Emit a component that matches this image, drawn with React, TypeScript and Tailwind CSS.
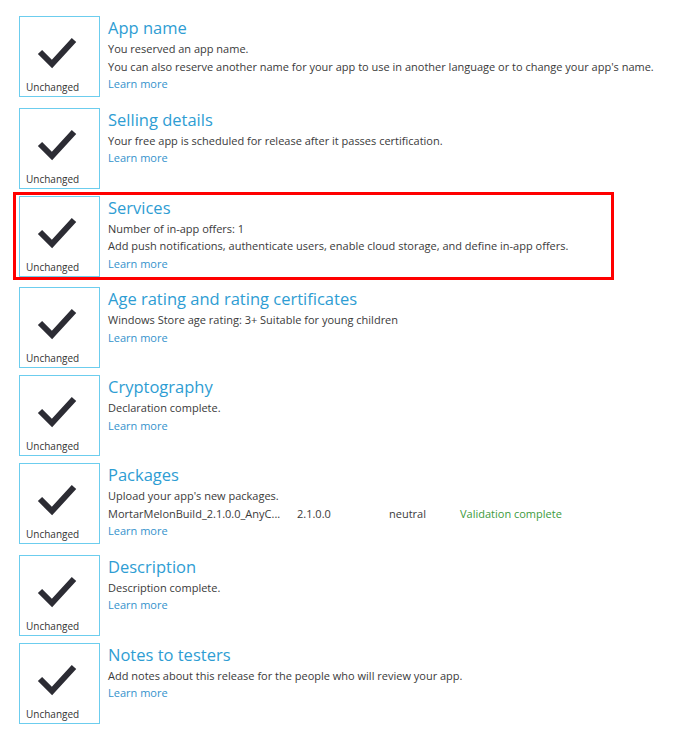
import React from 'react';

interface Section {
  title: string;
  lines: React.ReactNode[];
  highlighted?: boolean;
}

const sections: Section[] = [
  {
    title: 'App name',
    lines: [
      'You reserved an app name.',
      "You can also reserve another name for your app to use in another language or to change your app's name.",
    ],
  },
  {
    title: 'Selling details',
    lines: ['Your free app is scheduled for release after it passes certification.'],
  },
  {
    title: 'Services',
    lines: [
      'Number of in-app offers: 1',
      'Add push notifications, authenticate users, enable cloud storage, and define in-app offers.',
    ],
    highlighted: true,
  },
  {
    title: 'Age rating and rating certificates',
    lines: ['Windows Store age rating: 3+ Suitable for young children'],
  },
  {
    title: 'Cryptography',
    lines: ['Declaration complete.'],
  },
  {
    title: 'Packages',
    lines: [
      "Upload your app's new packages.",
      <div className="flex">
        <span className="w-[189px]">MortarMelonBuild_2.1.0.0_AnyC...</span>
        <span className="w-[92px]">2.1.0.0</span>
        <span className="w-[71px]">neutral</span>
        <span className="text-[#3c9a3c]">Validation complete</span>
      </div>,
    ],
  },
  {
    title: 'Description',
    lines: ['Description complete.'],
  },
  {
    title: 'Notes to testers',
    lines: ['Add notes about this release for the people who will review your app.'],
  },
];

function CheckTile() {
  return (
    <div className="relative w-[81px] h-[81px] shrink-0 border border-[#6ccdee] bg-white">
      <svg width="79" height="79" viewBox="0 0 79 79" className="absolute left-0 top-0">
        <polyline
          points="20,35 32,47 54,23"
          fill="none"
          stroke="#2c2c34"
          strokeWidth="6"
          strokeLinejoin="miter"
        />
      </svg>
      <span className="absolute left-[6px] bottom-[3px] text-[10px] leading-[12px] text-[#333]">Unchanged</span>
    </div>
  );
}

export default function App() {
  return (
    <div
      className="min-h-screen bg-white pl-[19px] pt-[16px]"
      style={{ fontFamily: '"Open Sans", "Noto Sans", sans-serif' }}
    >
      {sections.map((s, i) => (
        <div key={i} className="relative flex items-start gap-[8px] mb-[7px]">
          {s.highlighted && (
            <div className="absolute -left-[6px] -top-[4px] w-[601px] h-[88px] border-[3px] border-[#ff0000] pointer-events-none" />
          )}
          <CheckTile />
          <div className="flex flex-col pb-[8px] text-[11px] leading-[17.5px] text-[#3a3a3a]">
            <div className="text-[16.5px] leading-[24px] text-[#2e9dd3]">{s.title}</div>
            {s.lines.map((l, j) => (
              <div key={j}>{l}</div>
            ))}
            <div className="text-[#3592cc]">Learn more</div>
          </div>
        </div>
      ))}
    </div>
  );
}
